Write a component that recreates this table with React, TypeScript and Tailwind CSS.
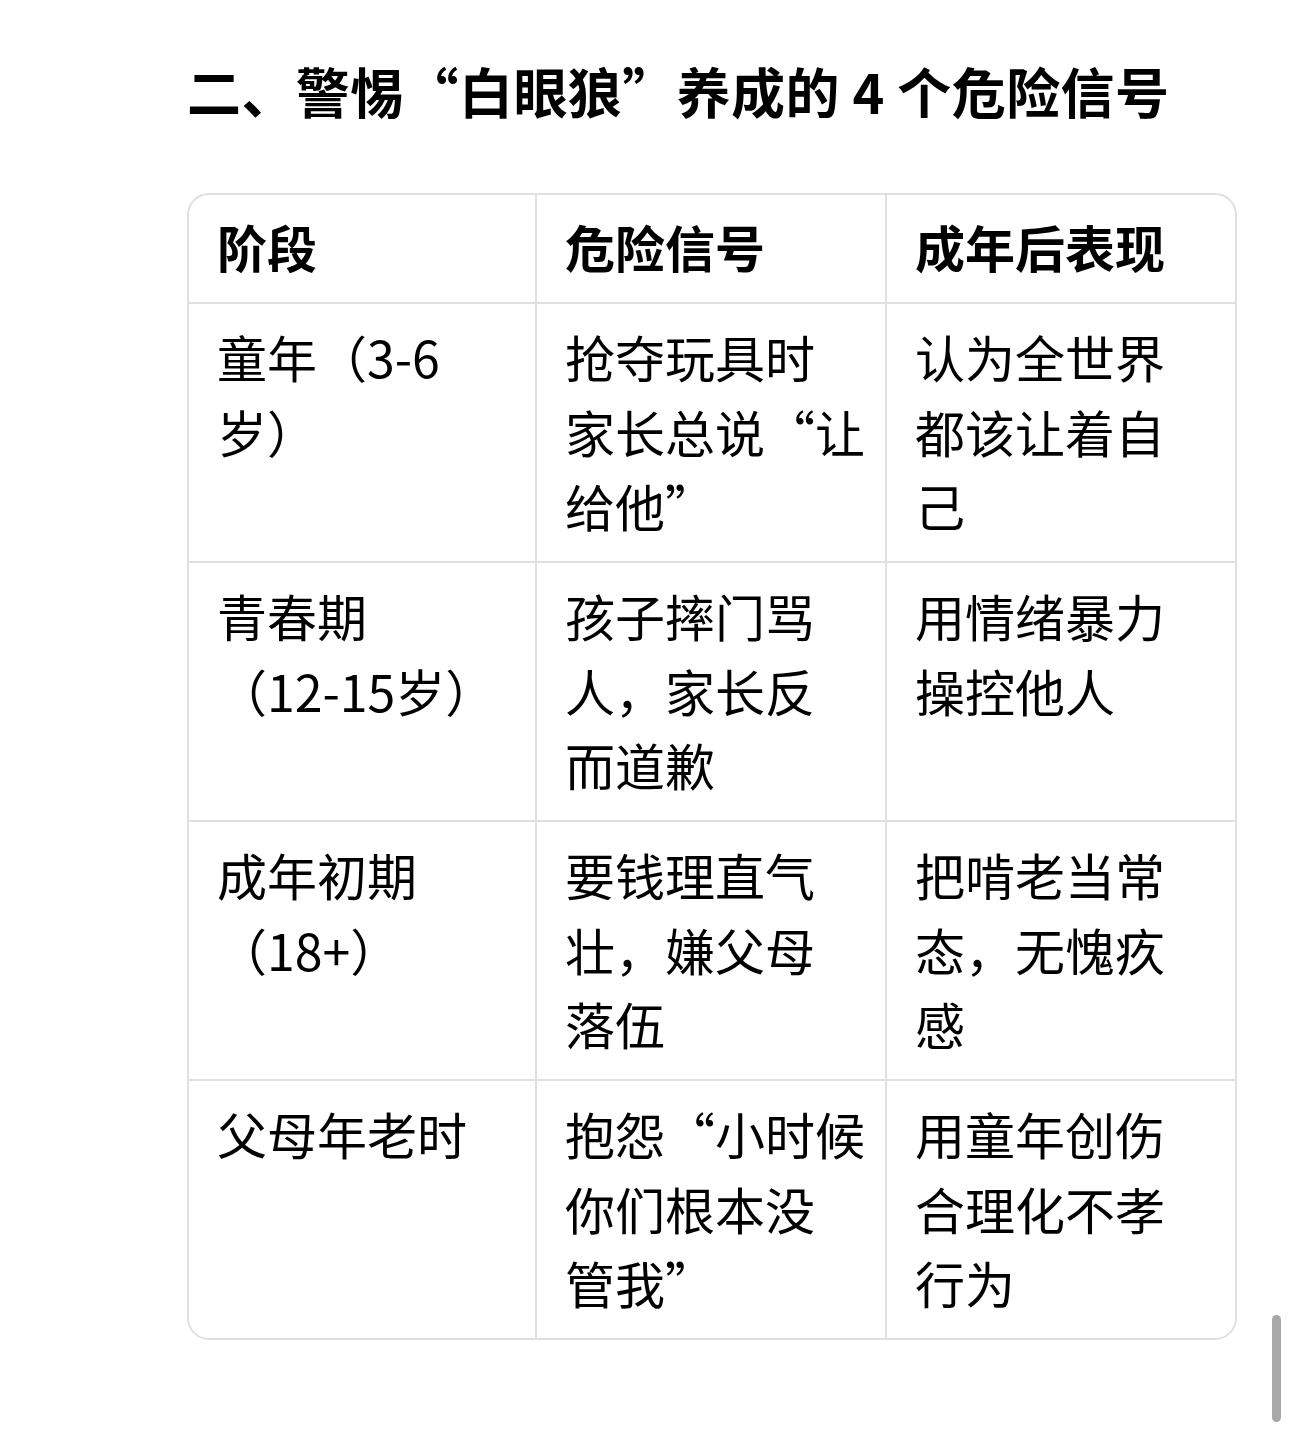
import React from "react";

const rows: string[][][] = [
  [["童年（3-6", "岁）"], ["抢夺玩具时", "家长总说“让", "给他”"], ["认为全世界", "都该让着自", "己"]],
  [["青春期", "（12-15岁）"], ["孩子摔门骂", "人，家长反", "而道歉"], ["用情绪暴力", "操控他人"]],
  [["成年初期", "（18+）"], ["要钱理直气", "壮，嫌父母", "落伍"], ["把啃老当常", "态，无愧疚", "感"]],
  [["父母年老时"], ["抱怨“小时候", "你们根本没", "管我”"], ["用童年创伤", "合理化不孝", "行为"]],
];

const font = { fontFamily: '"Noto Sans CJK SC", "Noto Sans", sans-serif' };

export default function App() {
  return (
    <div className="relative w-[1290px] h-[1447px] bg-white text-black" style={font}>
      <div className="pl-[187px] pt-[57px]">
        <h2 className="text-[54px] font-bold leading-[68px] tracking-[0.4px] text-black whitespace-nowrap">
          二、警惕“白眼狼”养成的 4 个危险信号
        </h2>
        <div className="mt-[68px] w-[1050px] border-2 border-[#e0e0e0] rounded-[22px] overflow-hidden">
          <div className="grid grid-cols-[348px_350px_348px]">
            {["阶段", "危险信号", "成年后表现"].map((h, i) => (
              <div
                key={h}
                className={`px-[28px] pt-[14px] pb-[19px] text-[50px] leading-[74px] font-bold whitespace-nowrap ${i < 2 ? "border-r-2 border-[#e0e0e0]" : ""}`}
              >
                {h}
              </div>
            ))}
          </div>
          {rows.map((r, ri) => (
            <div key={ri} className="grid grid-cols-[348px_350px_348px] border-t-2 border-[#e0e0e0] h-[259px]">
              {r.map((lines, i) => (
                <div
                  key={i}
                  className={`px-[28px] pt-[15px] text-[50px] leading-[74.5px] whitespace-nowrap ${i < 2 ? "border-r-2 border-[#e0e0e0]" : ""}`}
                >
                  {lines.map((l, li) => (
                    <div key={li}>{l}</div>
                  ))}
                </div>
              ))}
            </div>
          ))}
        </div>
      </div>
      <div className="absolute left-[1272px] top-[1315px] w-[9px] h-[107px] rounded-full bg-[#a8a8a8]" />
    </div>
  );
}
